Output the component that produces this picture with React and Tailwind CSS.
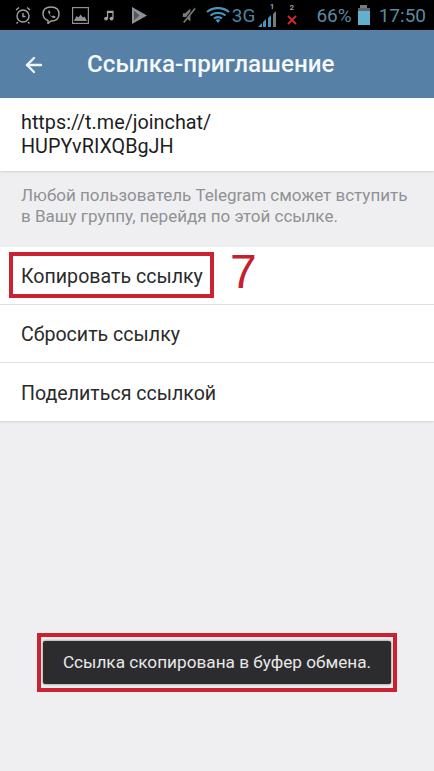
import { ArrowLeft } from 'lucide-react';

const rows = ['Копировать ссылку', 'Сбросить ссылку', 'Поделиться ссылкой'];

const StatusIcons = () => (
  <div className="flex items-center">
    <svg className="ml-[14px]" width="18" height="18" viewBox="0 0 18 18" fill="none" stroke="#a0a3a5" strokeWidth="1.400">
      <circle cx="9" cy="10" r="6" />
      <path d="M9 7v3.500h2.500M2 4l3-2.500M16 4l-3-2.500M4 16l-1.500 1.500M14 16l1.500 1.500" />
    </svg>
    <svg className="ml-[10px]" width="18" height="18" viewBox="0 0 18 18" fill="none" stroke="#a0a3a5" strokeWidth="1.400">
      <path d="M9 1c5 0 8 2.500 8 7s-3 7-8 7l-3 2.500V14.500C3 13.500 1 11.500 1 8c0-4.500 3-7 8-7z" />
      <path d="M6 5l1.500-.5 1 2.500-1 1c.5 1 1.500 2 2.500 2.500l1-1 2.500 1-.5 1.500c-3 .5-7-3.500-7-8z" fill="#a0a3a5" stroke="none" />
    </svg>
    <svg className="ml-[12px]" width="17" height="17" viewBox="0 0 17 17" fill="#8f9294" stroke="#8f9294" strokeWidth="1.200">
      <rect x="0.600" y="0.600" width="15.800" height="15.800" fill="none" />
      <path d="M2 14l2.500-5 2 1.500 2-3 2.500 3 1.500-1 2.500 4.500z" stroke="none" />
    </svg>
    <svg className="ml-[15px]" width="10" height="12" viewBox="0 0 12 14" fill="#a0a3a5">
      <path d="M3.500 2h8v9h-1.500V4.500h-5V11H3.500z" />
      <circle cx="2.500" cy="11.300" r="2.300" />
      <circle cx="9" cy="11.300" r="2.300" />
    </svg>
    <svg className="ml-[18px]" width="15" height="17" viewBox="0 0 15 17">
      <path d="M0 0l15 8.500L0 17z" fill="#8f9294" />
      <path d="M2 3.500v10l5.500-5z" fill="#55585a" />
    </svg>
  </div>
);

const StatusRight = () => (
  <div className="flex items-center">
    <svg width="15" height="20" viewBox="0 0 16 20" fill="none" stroke="#777c7f" strokeWidth="1.600">
      <path d="M2 8v4h2.500L10 17V3L4.500 8z" fill="#777c7f" stroke="none" />
      <path d="M2 18L15 2" stroke="#111" strokeWidth="2.400" />
      <path d="M3 18L15 3" />
    </svg>
    <svg className="ml-[10px]" width="24" height="16" viewBox="0 0 24 16" fill="none" stroke="#4a94bc" strokeWidth="2.200">
      <path d="M1 5c6-5.300 16-5.300 22 0M4.500 8.500c4-3.500 11-3.500 15 0M8 11.500c2.200-1.800 5.800-1.800 8 0" />
      <path d="M12 16l-2.500-3c1.500-1 3.500-1 5 0z" fill="#4a94bc" stroke="none" />
    </svg>
    <span className="ml-[2px] text-[19px] leading-none text-[#47849f]">3G</span>
    <div className="relative ml-[3px] h-[24px] w-[20px]">
      <span className="absolute right-[4px] top-0 text-[8px] font-bold leading-none text-[#9a9ea1]">1</span>
      <svg className="absolute bottom-0 left-0" width="20" height="17" viewBox="0 0 20 17">
        <path d="M0 17l4-4v4z" fill="#4a94bc" />
        <path d="M5 17v-5l3-3v8z" fill="#4a94bc" />
        <path d="M10 17V8l3-3v12z" fill="#4a94bc" />
        <path d="M15 17V4l3-3v16z" fill="#777c7f" />
      </svg>
    </div>
    <div className="relative ml-[9px] h-[24px] w-[10px]">
      <span className="absolute left-[2px] top-[1px] text-[8px] font-bold leading-none text-[#9a9ea1]">2</span>
      <svg className="absolute bottom-[2px] left-0" width="10" height="10" viewBox="0 0 10 10" fill="none" stroke="#d1262c" strokeWidth="2">
        <path d="M1 1l8 8M9 1l-8 8" />
      </svg>
    </div>
    <span className="ml-[19px] text-[19px] leading-none text-[#5b8aa1]">66%</span>
    <div className="ml-[6px] flex flex-col items-center">
      <div className="h-[3px] w-[7px] bg-[#777c7f]" />
      <div className="h-[3px] w-[12px] bg-[#5c6a70]" />
      <div className="h-[14px] w-[12px] bg-[#62b0d0]" />
    </div>
    <span className="ml-[9px] text-[19px] leading-none text-[#5b8aa1]">17:50</span>
  </div>
);

export default function App() {
  return (
    <div className="relative flex h-[771px] w-[434px] flex-col overflow-hidden bg-[#efeff1] [font-family:'Roboto',sans-serif]">
      <div className="flex h-[30px] items-center justify-between bg-black pr-[8px]">
        <StatusIcons />
        <StatusRight />
      </div>

      <header className="flex h-[68px] items-center bg-[#5680a6] pl-[22px] pt-[1px]">
        <ArrowLeft size={24} strokeWidth={2.400} color="#eef4f8" />
        <h1 className="ml-[41px] text-[24.200px] font-medium text-[#f4f8fb]">Ссылка-приглашение</h1>
      </header>

      <section className="h-[73px] bg-white pl-[21px] pt-[13px] text-[19.800px] leading-[24px] text-[#1d1d1f] shadow-[0_1px_2px_rgba(0,0,0,0.12)]">
        <div>https://t.me/joinchat/</div>
        <div>HUPYvRIXQBgJH</div>
      </section>

      <p className="h-[76px] px-[21px] pt-[14px] text-[17px] leading-[21px] text-[#909194] whitespace-nowrap">
        Любой пользователь Telegram сможет вступить
        <br />
        в Вашу группу, перейдя по этой ссылке.
      </p>

      <div className="bg-white shadow-[0_1px_2px_rgba(0,0,0,0.12)]">
        {rows.map((row, i) => (
          <div
            key={row}
            className={`flex h-[58px] items-center pl-[21px] pt-[3px] text-[19.600px] text-[#2a2a2c] ${i < 2 ? 'border-b border-[#e0e0e2]' : ''}`}
          >
            {row}
          </div>
        ))}
      </div>

      {/* red marks drawn over the screenshot */}
      <div className="absolute left-[9px] top-[252px] h-[46px] w-[205px] border-[4px] border-[#cb2232]" />
      <div className="absolute left-[230px] top-[245px] text-[48px] leading-[54px] text-[#c5202e] [font-family:'Liberation_Sans',sans-serif]">7</div>

      <div className="absolute left-[37px] top-[633px] flex h-[59px] w-[360px] items-center justify-center border-[4px] border-[#cb2232]">
        <div className="flex h-[43px] w-[348px] items-center justify-center rounded-[2px] bg-[#2c2c2e] text-[17.200px] text-[#e8e8e8] shadow-[0_0_3px_rgba(0,0,0,0.5)]">
          Ссылка скопирована в буфер обмена.
        </div>
      </div>
    </div>
  );
}
